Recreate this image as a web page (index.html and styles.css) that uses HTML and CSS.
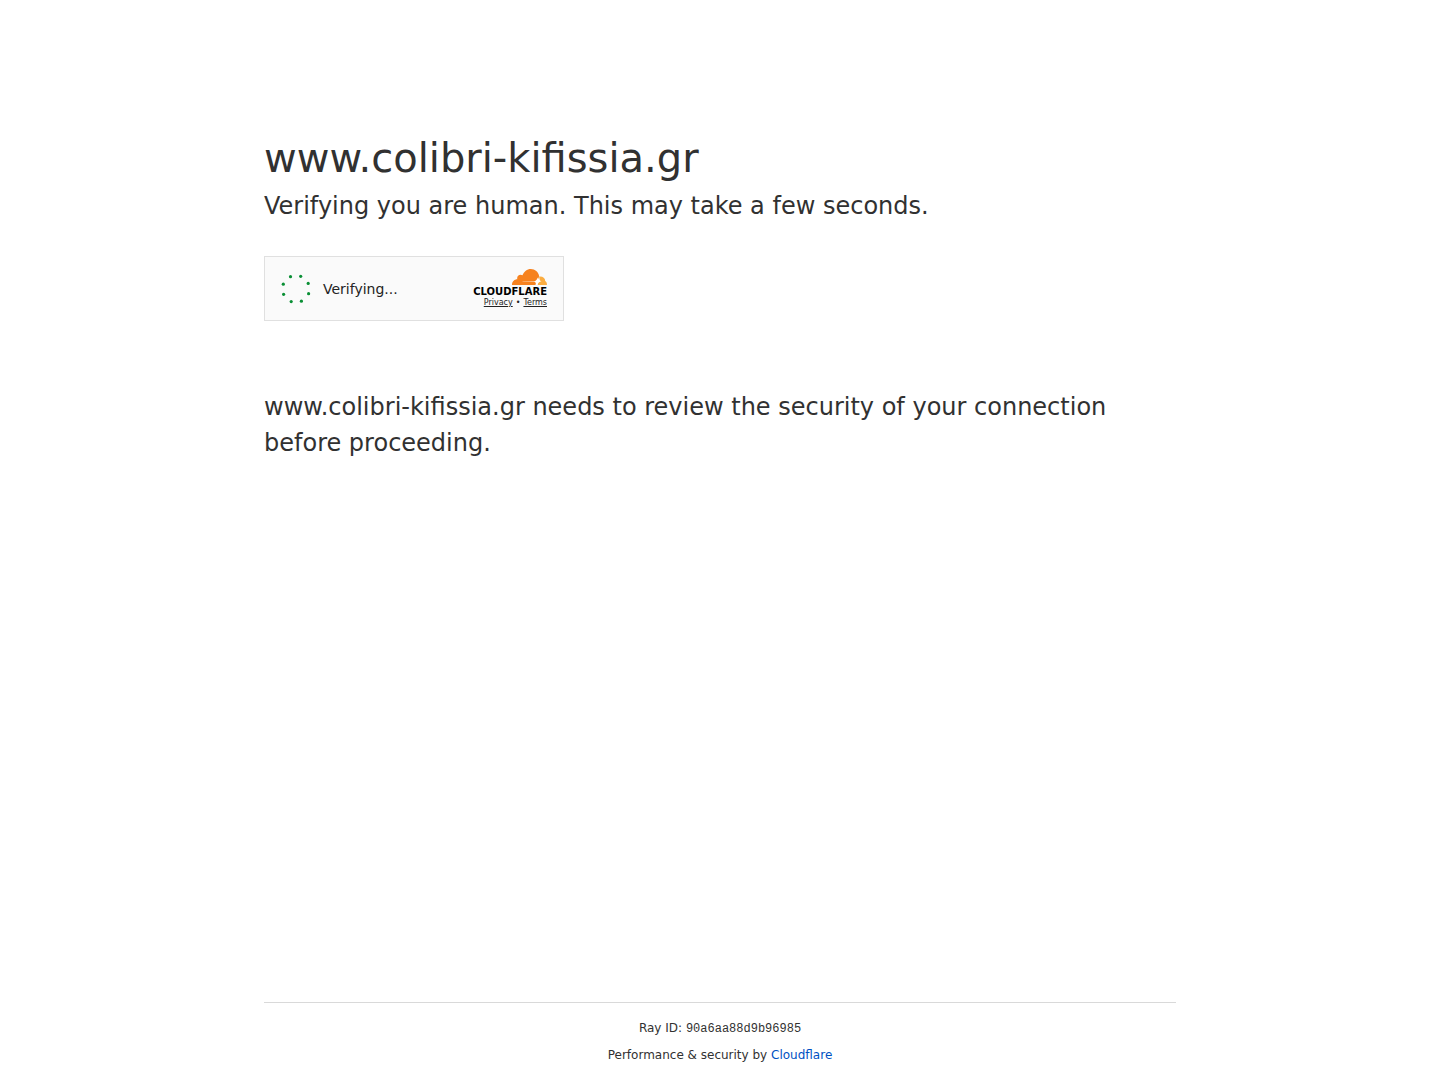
FILE: index.html
```html
<!DOCTYPE html>
<html lang="en">
<head>
    <meta charset="UTF-8">
    <meta name="viewport" content="width=device-width, initial-scale=1.0">
    <title>Just a moment...</title>
    <link rel="stylesheet" href="styles.css">
</head>
<body>
    <main class="content">
        <h1>www.colibri-kifissia.gr</h1>
        <h2>Verifying you are human. This may take a few seconds.</h2>
        <div class="widget">
            <div class="status" role="status">
                <svg class="spinner" viewBox="0 0 30 30" aria-hidden="true">
                    <circle cx="9.5" cy="2.7" r="1.6"/>
                    <circle cx="19.7" cy="2.3" r="1.6"/>
                    <circle cx="27.2" cy="9.4" r="1.6"/>
                    <circle cx="27.6" cy="19.7" r="1.6"/>
                    <circle cx="20.4" cy="27.2" r="1.6"/>
                    <circle cx="10.2" cy="27.6" r="1.6"/>
                    <circle cx="2.6" cy="20.3" r="1.6"/>
                    <circle cx="2.3" cy="10.2" r="1.6"/>
                </svg>
                <span>Verifying...</span>
            </div>
            <div class="brand">
                <svg class="cloud" viewBox="0 0 35 16" aria-hidden="true">
                    <path fill="#f6821f" d="M0 16C-.2 12.600 2.300 10.300 5.300 10.200C4.500 7 7.600 4.700 10.500 6.300C12 2.500 15 0 18.800 0C23 0 26.500 3 27.100 7.100C26.800 9 25.800 11.300 24.300 12.500L24.200 14.500L23.500 16Z"/>
                    <path fill="#fbad41" d="M25.400 16L26 13.700L28 12L27 7.500C31 7 33.500 9.500 33.100 12.100C34.300 12.600 35.300 14.500 34.900 16Z"/>
                    <path fill="#fff" d="M10.500 12.200H22.500C24 12 25 10.500 25.600 8.500C26 10.500 27 11.500 29.500 12.200C27 12.800 26 13.800 25.500 16H23.700C24.300 14 23.500 12.800 22 12.700L10.500 12.600Z"/>
                </svg>
                <span class="wordmark">CLOUDFLARE</span>
                <div class="terms">
                    <a href="#">Privacy</a>
                    <span>•</span>
                    <a href="#">Terms</a>
                </div>
            </div>
        </div>
        <p class="message">www.colibri-kifissia.gr needs to review the security of your connection before proceeding.</p>
    </main>
    <footer class="footer">
        <div class="footer-inner">
            <div>Ray ID: <code>90a6aa88d9b96985</code></div>
            <div>Performance &amp; security by <a href="#">Cloudflare</a></div>
        </div>
    </footer>
</body>
</html>
```
FILE: styles.css
```css
* {
    box-sizing: border-box;
    margin: 0;
    padding: 0;
}
body {
    display: flex;
    flex-direction: column;
    min-height: 100vh;
    background-color: #fff;
    color: #313131;
    font-family: "DejaVu Sans", sans-serif;
    line-height: 1.5;
}
.content {
    flex: 1;
    width: 100%;
    max-width: 960px;
    margin: 128px auto 0;
    padding: 0 24px;
}
h1 {
    font-size: 40px;
    font-weight: 400;
    line-height: 60px;
}
h2,
.message {
    font-size: 24px;
    font-weight: 400;
    line-height: 36px;
}
.widget {
    display: flex;
    align-items: center;
    justify-content: space-between;
    width: 300px;
    height: 65px;
    margin: 32px 0 68px;
    padding: 0 16px;
    background-color: #fafafa;
    border: 1px solid #e0e0e0;
}
.status {
    display: flex;
    align-items: center;
    gap: 12px;
    color: #232323;
    font-size: 14px;
    line-height: 18px;
}
.spinner {
    width: 30px;
    height: 30px;
    fill: #0a8f35;
}
.brand {
    display: flex;
    flex-direction: column;
    align-items: flex-end;
}
.cloud {
    width: 35px;
    height: 16px;
}
.wordmark {
    color: #000;
    font-size: 10px;
    font-weight: 700;
    line-height: 13px;
}
.terms {
    display: flex;
    gap: 3px;
    color: #232323;
    font-size: 8px;
    line-height: 10px;
}
.terms a {
    color: inherit;
}
.footer {
    width: 100%;
    max-width: 960px;
    margin: 0 auto;
    padding: 0 24px;
    font-size: 12px;
    line-height: 18px;
    text-align: center;
}
.footer-inner {
    display: flex;
    flex-direction: column;
    gap: 8px;
    padding: 16px 0;
    border-top: 1px solid #d9d9d9;
}
.footer code {
    font-family: "Liberation Mono", monospace;
}
.footer a {
    color: #0051c3;
    text-decoration: none;
}
```
